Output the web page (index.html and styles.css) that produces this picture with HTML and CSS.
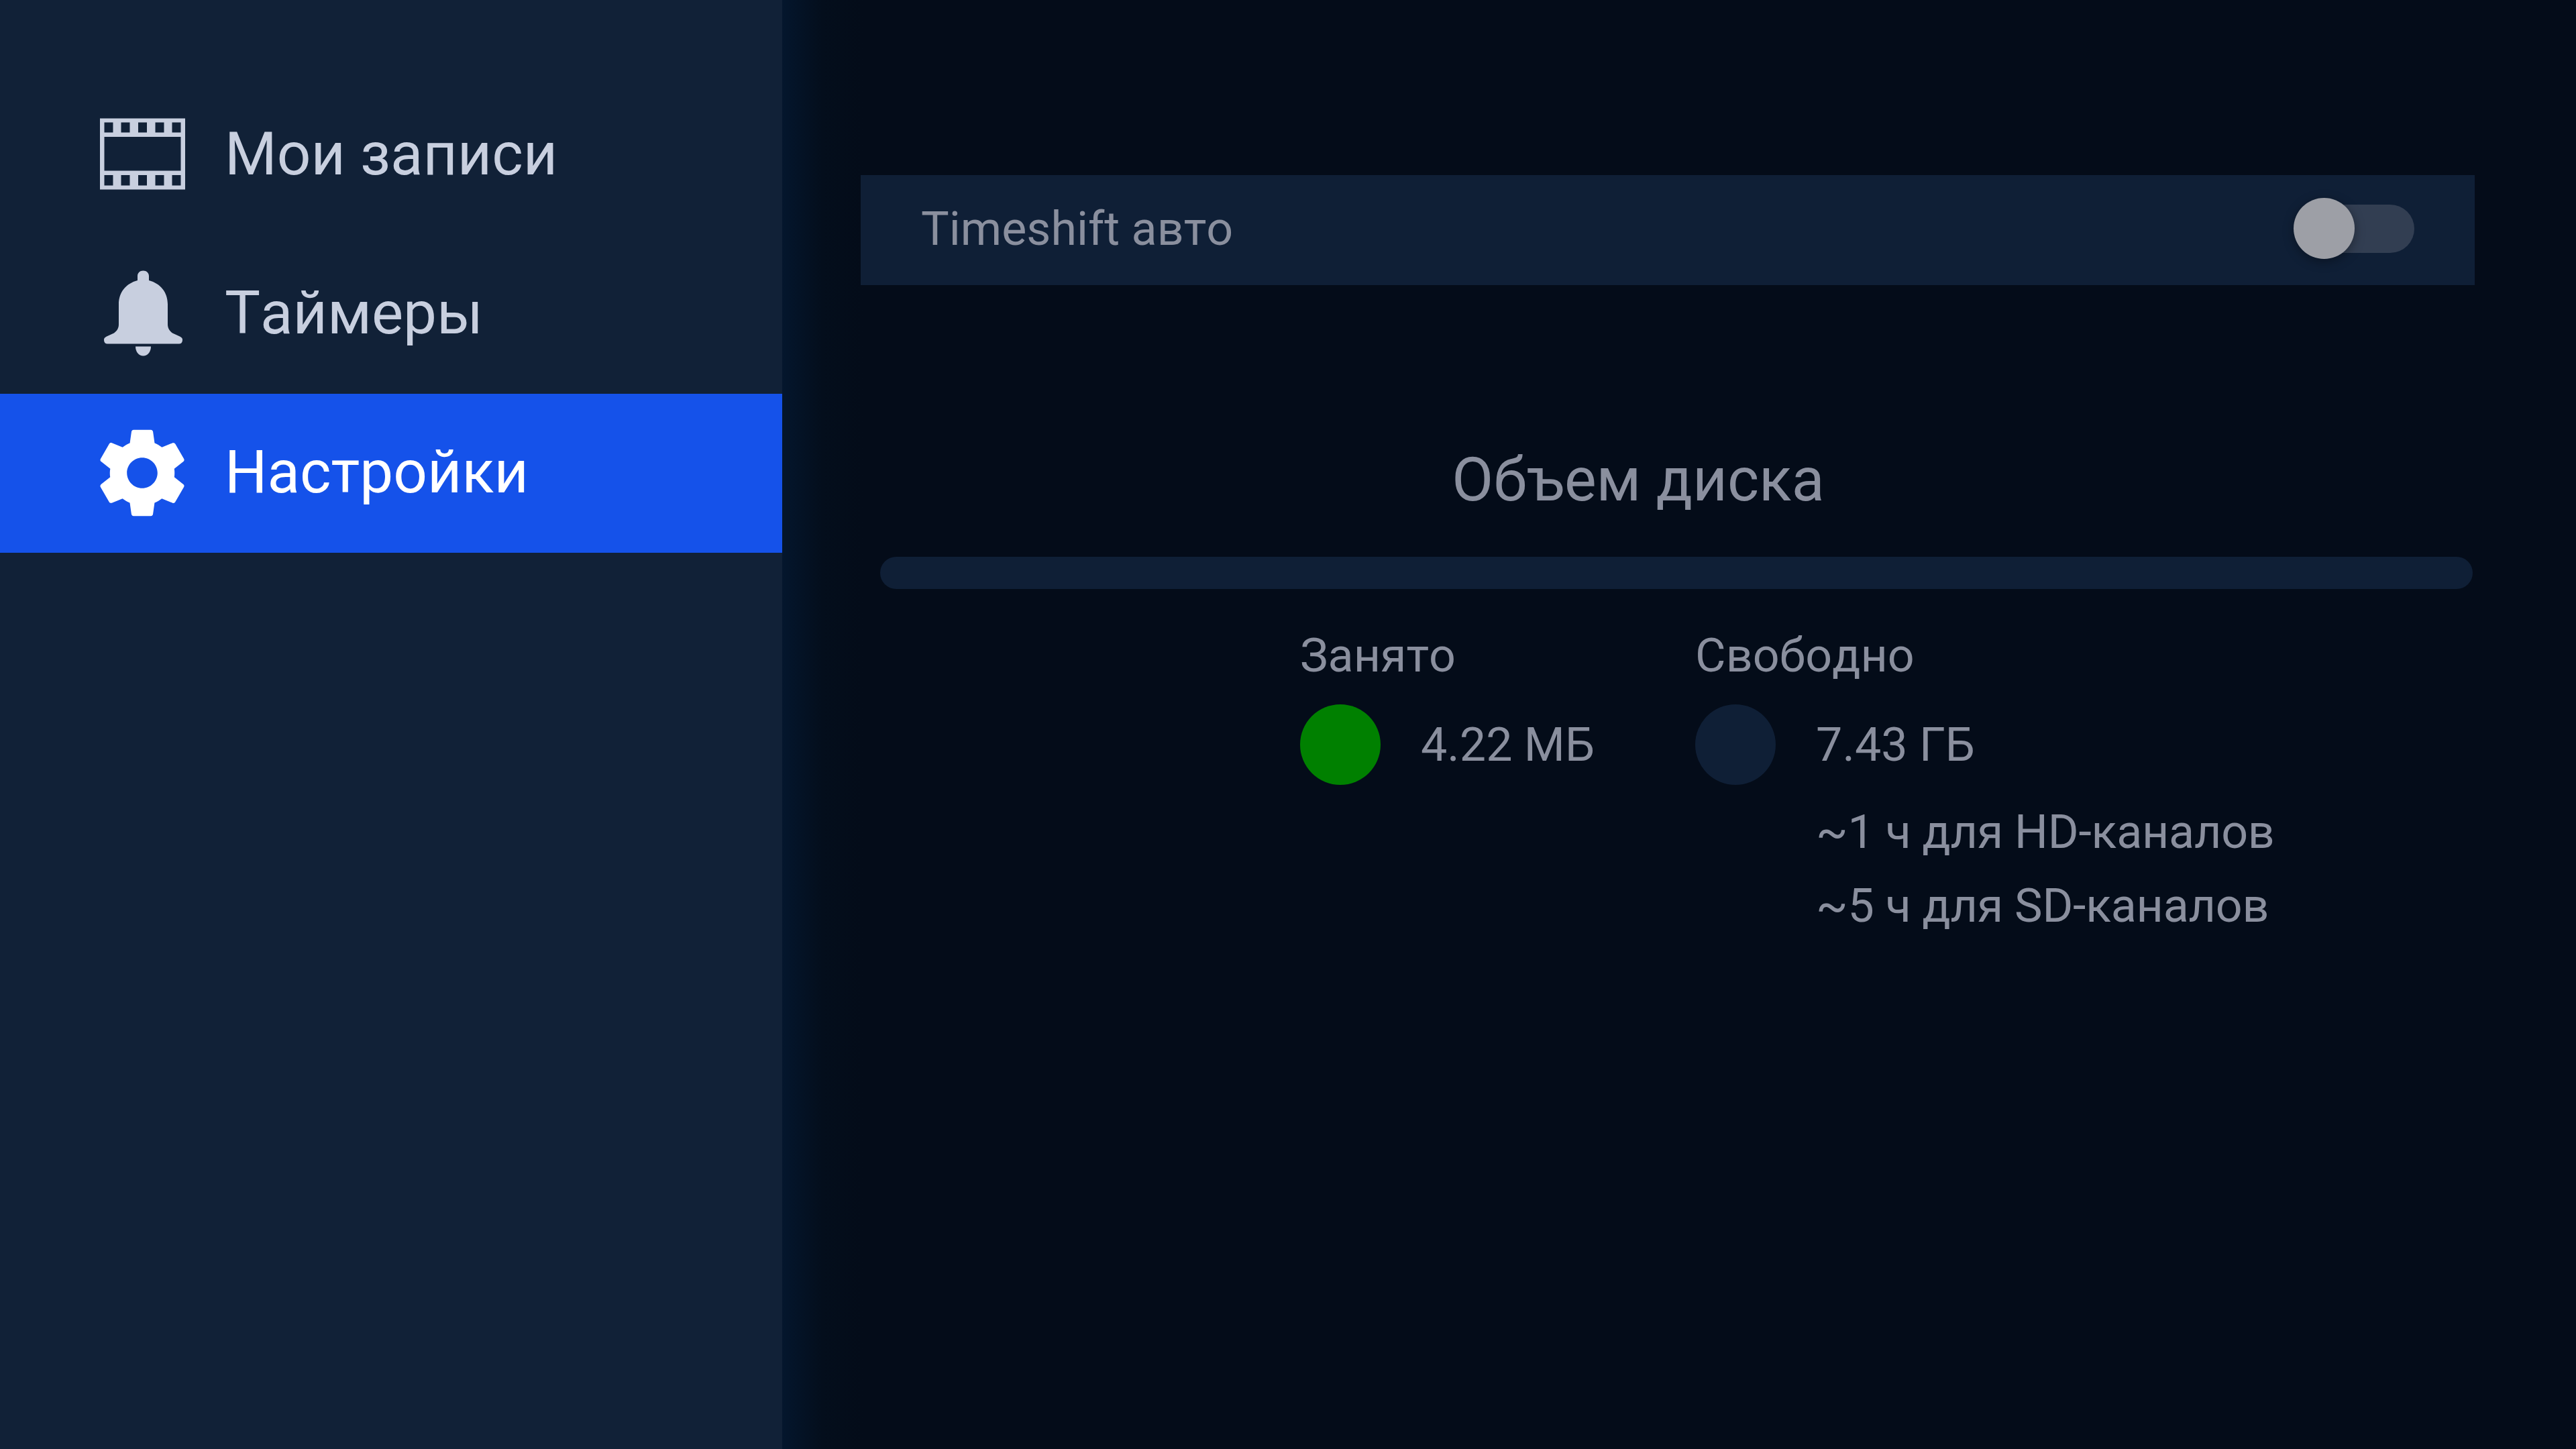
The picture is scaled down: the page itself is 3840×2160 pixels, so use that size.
FILE: index.html
```html
<!DOCTYPE html>
<html lang="ru">

<head>
  <meta charset="UTF-8">
  <title>Настройки</title>
  <link rel="stylesheet" href="styles.css">
</head>

<body>
  <div class="app">
    <nav class="sidebar">
      <a class="nav-item">
        <svg class="nav-icon" viewBox="-1 -11.5 128 134">
          <path fill="currentColor" fill-rule="evenodd" d="M0 0H127V106H0ZM6.5 27.5V78H120.5V27.5ZM6.5 6V21H19.5V6ZM31.5 6V21H44.5V6ZM57 6V21H70V6ZM82.5 6V21H95.5V6ZM107.5 6V21H120.5V6ZM6.5 84.5V100H19.5V84.5ZM31.5 84.5V100H44.5V84.5ZM57 84.5V100H70V84.5ZM82.5 84.5V100H95.5V84.5ZM107.5 84.5V100H120.5V84.5Z" />
        </svg>
        <span>Мои записи</span>
      </a>
      <a class="nav-item">
        <svg class="nav-icon" viewBox="-7 -1.5 128 134">
          <path fill="currentColor" d="M58.5 0c5 0 8.5 3.5 8.5 8v6.5C84 19 95 32 95 50v30c0 6 3 10 7 13l11 5c3 1.500 4 3 4 5 0 4-2 6-5 6H5c-3 0-5-2-5-6 0-2 1-3.500 4-5l11-5c4-3 7-7 7-13V50c0-18 11-31 28-35.500V8c0-4.500 3.500-8 8.500-8Z" />
          <path fill="currentColor" d="M47 113h23c0 8-5 14-11.500 14S47 121 47 113Z" />
        </svg>
        <span>Таймеры</span>
      </a>
      <a class="nav-item active">
        <svg class="nav-icon" viewBox="2.6 2.15 18.8 20">
          <path fill="currentColor" d="M19.14 12.94c.04-.3.06-.61.06-.94 0-.32-.02-.64-.07-.94l2.03-1.58c.18-.14.23-.41.12-.61l-1.92-3.32c-.12-.22-.37-.29-.59-.22l-2.39.96c-.5-.38-1.03-.7-1.62-.94l-.36-2.54c-.04-.24-.24-.41-.48-.41h-3.84c-.24 0-.43.17-.47.41l-.36 2.54c-.59.24-1.13.57-1.62.94l-2.39-.96c-.22-.08-.47 0-.59.22L2.74 8.87c-.12.21-.08.47.12.61l2.03 1.58c-.05.3-.09.63-.09.94s.02.64.07.94l-2.03 1.58c-.18.14-.23.41-.12.61l1.92 3.32c.12.22.37.29.59.22l2.39-.96c.5.38 1.03.7 1.62.94l.36 2.54c.05.24.24.41.48.41h3.84c.24 0 .44-.17.47-.41l.36-2.54c.59-.24 1.13-.56 1.62-.94l2.39.96c.22.08.47 0 .59-.22l1.92-3.32c.12-.22.07-.47-.12-.61l-2.01-1.58zM12 15.400c-1.870 0-3.400-1.530-3.400-3.400s1.530-3.400 3.400-3.400 3.400 1.530 3.400 3.400-1.530 3.400-3.400 3.400z" />
        </svg>
        <span>Настройки</span>
      </a>
    </nav>

    <main class="content">
      <div class="option-row">
        <span>Timeshift авто</span>
        <div class="toggle"><div class="toggle-knob"></div></div>
      </div>

      <h2 class="disk-title">Объем диска</h2>
      <div class="disk-bar"></div>

      <div class="legend">
        <div class="legend-col">
          <div class="legend-label">Занято</div>
          <div class="legend-value">
            <div class="dot dot-used"></div>
            <span>4.22 МБ</span>
          </div>
        </div>
        <div class="legend-col">
          <div class="legend-label">Свободно</div>
          <div class="legend-value">
            <div class="dot dot-free"></div>
            <span>7.43 ГБ</span>
          </div>
          <div class="legend-note">~1 ч для HD-каналов</div>
          <div class="legend-note">~5 ч для SD-каналов</div>
        </div>
      </div>
    </main>
  </div>
</body>

</html>
```

FILE: styles.css
```css
* {
  box-sizing: border-box;
}

html,
body {
  margin: 0;
  height: 100%;
}

body {
  font-family: Roboto, "Liberation Sans", sans-serif;
  font-kerning: none;
  background-color: #040c19;
  color: #8a8f9e;
  font-size: 70px;
}

.app {
  display: flex;
  height: 2160px;
  overflow: hidden;
}

.sidebar {
  width: 1166px;
  flex-shrink: 0;
  padding-top: 113px;
  background-color: #112137;
}

.nav-item {
  display: flex;
  align-items: center;
  height: 237px;
  color: #c8cfdf;
  font-size: 89px;
}

.nav-item span {
  margin-bottom: 4px;
}

.nav-item.active {
  background-color: #1552ea;
  color: #fff;
}

.nav-icon {
  width: 128px;
  height: 134px;
  margin-left: 148px;
  margin-right: 59px;
  flex-shrink: 0;
}

.content {
  flex: 1;
  padding: 261px 151px 0 117px;
  background: linear-gradient(to right, #04162d 0, #040e1c 60px, #040c19 120px);
}

.option-row {
  display: flex;
  align-items: center;
  justify-content: space-between;
  height: 164px;
  padding: 0 90px 4px;
  background-color: #0f1f36;
}

.toggle {
  position: relative;
  width: 160px;
  height: 72px;
  border-radius: 36px;
  background-color: #323e52;
}

.toggle-knob {
  position: absolute;
  left: -20px;
  top: -10px;
  width: 91px;
  height: 91px;
  border-radius: 50%;
  background-color: #9d9fa6;
  box-shadow: 0 4px 16px rgba(0, 0, 0, 0.35);
}

.disk-title {
  margin: 0;
  padding: 242px 88px 0 0;
  font-size: 90px;
  font-weight: 400;
  line-height: 98px;
  text-align: center;
}

.disk-bar {
  height: 48px;
  margin: 65px 3px 0 29px;
  border-radius: 24px;
  background-color: #0f1f36;
}

.legend {
  display: flex;
  gap: 150px;
  margin-top: 59px;
  padding-left: 655px;
}

.legend-label {
  line-height: 80px;
}

.legend-value {
  display: flex;
  align-items: center;
  gap: 60px;
  margin-top: 33px;
}

.dot {
  width: 120px;
  height: 120px;
  border-radius: 50%;
}

.dot-used {
  background-color: #008000;
}

.dot-free {
  background-color: #0f1f36;
}

.legend-note {
  margin-left: 180px;
  line-height: 110px;
  letter-spacing: -0.25px;
}

.legend-value + .legend-note {
  margin-top: 15px;
}
```
